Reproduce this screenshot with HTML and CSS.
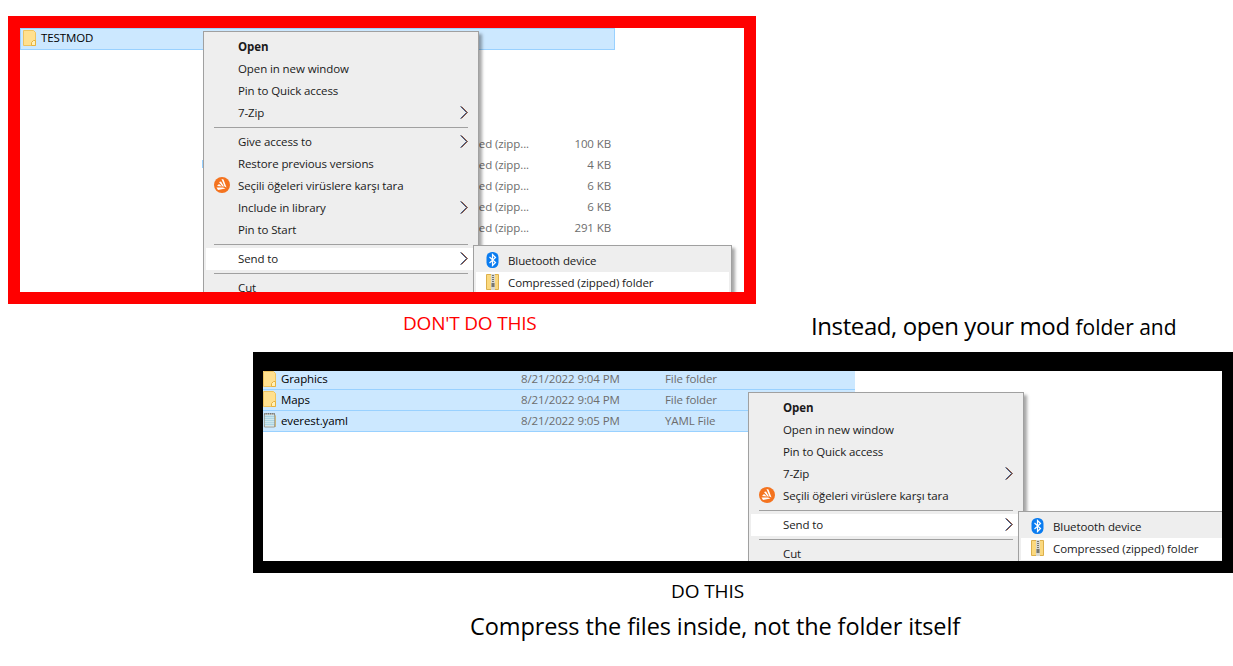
FILE: index.html
```html
<!DOCTYPE html>
<html lang="en">
<head>
<meta charset="utf-8">
<title>Compress the files inside</title>
<link rel="stylesheet" href="styles.css">
</head>
<body>
<svg class="sprite" width="0" height="0" aria-hidden="true">
	<symbol id="folder" viewBox="0 0 13 16">
		<path d="M0.5 0.5H10.5L12.5 2.5V15.5H0.5Z" fill="#ffe08f" stroke="#eec35f"/>
		<path d="M10.5 10.5H12.5V15.5H8.5V12.5Z" fill="#fff0b8" stroke="#e8b23e"/>
	</symbol>
	<symbol id="yaml" viewBox="0 0 14 16">
		<path d="M1.5 1.5H12.5V15.5H1.5Z" fill="#fff" stroke="#8c8c80"/>
		<path d="M2 3H12V14H2Z" fill="#a9d3e2"/>
		<path d="M2 5.5H12M2 7.5H12M2 9.5H12M2 11.5H12" stroke="#d6eaf0"/>
		<path d="M2 0.5V2M4 0.5V2M6 0.5V2M8 0.5V2M10 0.5V2M12 0.5V2" stroke="#666"/>
		<path d="M13.5 3V15.5" stroke="#c8b070"/>
	</symbol>
	<symbol id="chevron" viewBox="0 0 8 13">
		<path d="M0.6 0.5L6.6 6.5L0.6 12.5" fill="none" stroke="#2f74c0"/>
		<path d="M1.4 0.5L7.4 6.5L1.4 12.5" fill="none" stroke="#c8622a"/>
		<path d="M1 0.5L7 6.5L1 12.5" fill="none" stroke="#2c2c40" stroke-width="0.8"/>
	</symbol>
	<symbol id="shield" viewBox="0 0 16 16">
		<circle cx="8" cy="8" r="8" fill="#f4731f"/>
		<path d="M7.5 2L9.5 2.5L12.5 10.5L10.5 9.5ZM5 5L7 4.5L10 9.5L8.5 9.5ZM3 9L5 7L8 9.5ZM2.5 10.5L9 10.5L11.5 11.5L4 13Z" fill="#fff"/>
	</symbol>
	<symbol id="bluetooth" viewBox="0 0 12 16">
		<rect width="12" height="16" rx="5.5" fill="#0a7cf0"/>
		<path d="M3 5L9 10.5L6 13.5V2.5L9 5.5L3 11" fill="none" stroke="#fff" stroke-width="1.2"/>
	</symbol>
	<symbol id="zip" viewBox="0 0 13 16">
		<path d="M0.5 0.5H12.5V15.5H0.5Z" fill="#fbd97f" stroke="#dcb04c"/>
		<path d="M5 0H9V16H5Z" fill="#d8d8d0"/>
		<path d="M6 1H8V2H6ZM6 3H8V4H6ZM6 5H8V6H6ZM6 7H8V8H6ZM5.5 9H8.5V13H5.5Z" fill="#77776f"/>
	</symbol>
</svg>

<div class="frame frame-red">
	<ul class="files files-bad">
		<li class="file file-sel">
			<svg class="file-icon"><use href="#folder"/></svg>
			<span class="file-name">TESTMOD</span>
		</li>
		<li class="file-gap"></li>
		<li class="file file-zip"><span class="file-type">Compressed (zipp...</span><span class="file-size">100 KB</span></li>
		<li class="file file-zip"><span class="file-type">Compressed (zipp...</span><span class="file-size">4 KB</span></li>
		<li class="file file-zip"><span class="file-type">Compressed (zipp...</span><span class="file-size">6 KB</span></li>
		<li class="file file-zip"><span class="file-type">Compressed (zipp...</span><span class="file-size">6 KB</span></li>
		<li class="file file-zip"><span class="file-type">Compressed (zipp...</span><span class="file-size">291 KB</span></li>
		<li class="file file-zip"><span class="file-type">Compressed (zipp...</span><span class="file-size">494 KB</span></li>
	</ul>
	<div class="stray"></div>

	<div class="menu menu-bad">
		<div class="item item-bold">Open</div>
		<div class="item">Open in new window</div>
		<div class="item">Pin to Quick access</div>
		<div class="item">7-Zip<svg class="arrow"><use href="#chevron"/></svg></div>
		<div class="sep"></div>
		<div class="item">Give access to<svg class="arrow"><use href="#chevron"/></svg></div>
		<div class="item">Restore previous versions</div>
		<div class="item"><svg class="item-icon"><use href="#shield"/></svg>Seçili öğeleri virüslere karşı tara</div>
		<div class="item">Include in library<svg class="arrow"><use href="#chevron"/></svg></div>
		<div class="item">Pin to Start</div>
		<div class="sep"></div>
		<div class="item item-on">Send to<svg class="arrow"><use href="#chevron"/></svg></div>
		<div class="sep"></div>
		<div class="item">Cut</div>
	</div>
	<div class="submenu submenu-bad">
		<div class="subitem"><svg class="sub-icon"><use href="#bluetooth"/></svg>Bluetooth device</div>
		<div class="subitem subitem-on"><svg class="sub-icon"><use href="#zip"/></svg>Compressed (zipped) folder</div>
	</div>
</div>

<div class="caption-row">
	<p class="caption caption-dont">DON'T DO THIS</p>
	<p class="caption caption-instead">Instead, open your mod <span class="caption-small">folder and</span></p>
</div>

<div class="frame frame-black">
	<ul class="files files-good">
		<li class="file file-sel file-top">
			<svg class="file-icon"><use href="#folder"/></svg>
			<span class="file-name">Graphics</span>
			<span class="file-date">8/21/2022 9:04 PM</span>
			<span class="file-kind">File folder</span>
		</li>
		<li class="file file-sel">
			<svg class="file-icon"><use href="#folder"/></svg>
			<span class="file-name">Maps</span>
			<span class="file-date">8/21/2022 9:04 PM</span>
			<span class="file-kind">File folder</span>
		</li>
		<li class="file file-sel">
			<svg class="file-icon"><use href="#yaml"/></svg>
			<span class="file-name">everest.yaml</span>
			<span class="file-date">8/21/2022 9:05 PM</span>
			<span class="file-kind">YAML File</span>
		</li>
	</ul>

	<div class="menu menu-good">
		<div class="item item-bold">Open</div>
		<div class="item">Open in new window</div>
		<div class="item">Pin to Quick access</div>
		<div class="item">7-Zip<svg class="arrow"><use href="#chevron"/></svg></div>
		<div class="item"><svg class="item-icon"><use href="#shield"/></svg>Seçili öğeleri virüslere karşı tara</div>
		<div class="sep"></div>
		<div class="item item-on">Send to<svg class="arrow"><use href="#chevron"/></svg></div>
		<div class="sep"></div>
		<div class="item">Cut</div>
	</div>
	<div class="submenu submenu-good">
		<div class="subitem"><svg class="sub-icon"><use href="#bluetooth"/></svg>Bluetooth device</div>
		<div class="subitem subitem-on"><svg class="sub-icon"><use href="#zip"/></svg>Compressed (zipped) folder</div>
	</div>
</div>

<p class="caption caption-do">DO THIS</p>
<p class="caption caption-compress">Compress the files inside, not the folder itself</p>
</body>
</html>
```

FILE: styles.css
```css
* {
	padding:0;
	margin:0;
	box-sizing:border-box;
}
html {
	background:white;
}
body {
	width:1233px;
	height:666px;
	overflow:hidden;
	font-family:"Open Sans","Noto Sans",sans-serif;
	color:#000;
}
ol,ul {
	list-style-type:none;
}
.sprite {
	position:absolute;
}

/* screenshots in their thick frames */
.frame {
	position:relative;
	overflow:hidden;
	background:white;
	border-style:solid;
}
.frame-red {
	width:748px;
	height:288px;
	margin:16px 0 0 8px;
	border-color:#f00;
	border-width:12px;
}
.frame-black {
	width:980px;
	height:221px;
	margin-left:253px;
	border-color:#000;
	border-width:19px 11px 12px 10px;
}

/* explorer rows */
.files {
	font-size:11.5px;
	letter-spacing:-0.1px;
}
.files-bad {
	width:595px;
}
.files-good {
	width:592px;
}
.file {
	display:flex;
	align-items:center;
	height:21px;
	white-space:nowrap;
}
.file-sel {
	background:#cce8ff;
	border-bottom:1px solid #99d1ff;
	padding-bottom:2px;
}
.files-bad .file-sel {
	height:22px;
	border:1px solid #99d1ff;
	padding-left:2px;
}
.files-bad .file-name {
	padding-bottom:2px;
}
.file-top {
	height:19px;
}
.file-top span {
	padding-bottom:2px;
}
.file-icon {
	width:13px;
	height:16px;
	margin-right:1px;
	flex:none;
}
.file-name {
	margin-left:4px;
	width:240px;
	flex:none;
}
.file-date {
	width:144px;
	flex:none;
	color:#6d6d6d;
}
.file-kind {
	color:#6d6d6d;
}
.file-gap {
	height:83px;
}
.file-type {
	width:509px;
	text-align:right;
	color:#6d6d6d;
}
.file-size {
	width:82px;
	text-align:right;
	color:#6d6d6d;
}
.stray {
	position:absolute;
	left:182px;
	top:132px;
	width:1px;
	height:8px;
	background:#99d1ff;
}

/* context menus lie over the rows */
.menu,
.submenu {
	position:absolute;
	background:#eee;
	border:1px solid #a0a0a0;
	box-shadow:3px 3px 3px rgba(0,0,0,0.35);
	font-size:11.5px;
	letter-spacing:-0.1px;
	color:#1a1a1a;
}
.menu {
	width:276px;
	padding:4px 2px;
}
.menu-bad {
	left:183px;
	top:3px;
}
.menu-good {
	left:485px;
	top:21px;
}
.item {
	position:relative;
	display:flex;
	align-items:center;
	height:22px;
	padding:0 0 2px 32px;
	white-space:nowrap;
}
.item-bold {
	font-weight:700;
}
.item-on {
	background:white;
}
.item-icon {
	position:absolute;
	left:8px;
	top:2px;
	width:16px;
	height:16px;
}
.arrow {
	position:absolute;
	right:8px;
	top:4px;
	width:8px;
	height:13px;
}
.sep {
	height:1px;
	margin:3px 8px;
	background:#a0a0a0;
}
.submenu {
	width:259px;
	padding:4px 2px;
}
.submenu-bad {
	left:453px;
	top:217px;
}
.submenu-good {
	left:755px;
	top:140px;
}
.subitem {
	display:flex;
	align-items:center;
	height:22px;
	padding:0 0 2px 10px;
	white-space:nowrap;
}
.subitem-on {
	background:white;
}
.sub-icon {
	width:13px;
	height:16px;
	margin-right:9px;
	flex:none;
}

/* captions */
.caption-row {
	display:flex;
	height:48px;
	padding-left:403px;
}
.caption {
	color:#000;
	white-space:nowrap;
}
.caption-dont {
	width:408px;
	flex:none;
	margin-top:7px;
	color:#f00;
	font-size:19px;
	line-height:24px;
	letter-spacing:-0.2px;
}
.caption-instead {
	margin-top:6px;
	font-size:24px;
	line-height:32px;
	letter-spacing:-0.4px;
}
.caption-small {
	font-size:21px;
	letter-spacing:0;
}
.caption-do {
	margin:6px 0 0 671px;
	font-size:19px;
	line-height:24px;
	letter-spacing:-0.1px;
}
.caption-compress {
	margin:7px 0 0 470px;
	font-size:23.5px;
	line-height:32px;
	letter-spacing:-0.1px;
}
```
